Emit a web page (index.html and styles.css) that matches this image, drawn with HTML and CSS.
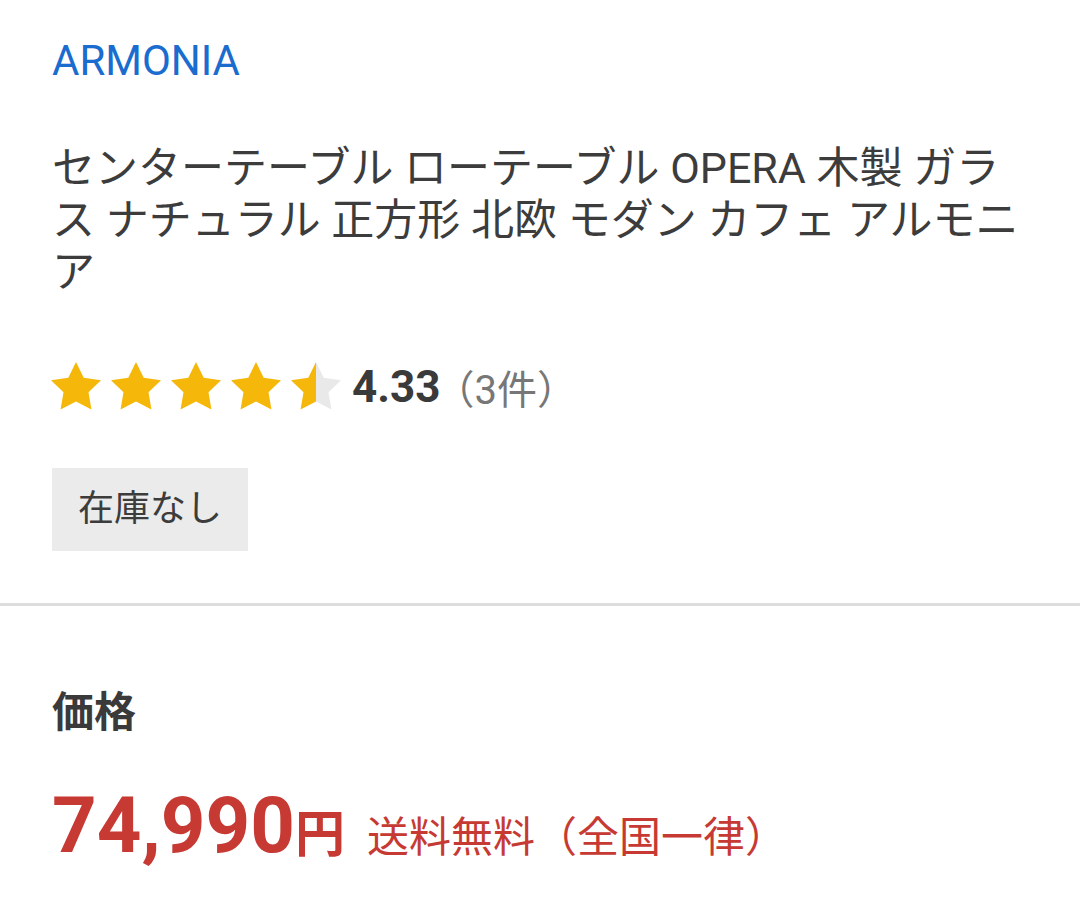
FILE: index.html
```html
<!DOCTYPE html>
<html lang="ja">
<head>
<meta charset="utf-8">
<link rel="stylesheet" href="styles.css">
</head>
<body>
<section class="info">
  <a class="brand">ARMONIA</a>
  <h1 class="title">センターテーブル ローテーブル OPERA 木製 ガラス ナチュラル 正方形 北欧 モダン カフェ アルモニア</h1>
  <div class="rating">
    <svg class="stars" width="300" height="60" viewBox="0 0 120 24">
      <defs>
        <path id="st" d="M12 2l3.09 6.26L22 9.27l-5 4.87 1.18 6.88L12 17.77l-6.18 3.25L7 14.14 2 9.27l6.91-1.01L12 2z"/>
        <linearGradient id="hg" x1="0" y1="0" x2="1" y2="0">
          <stop offset="0.5" stop-color="#f5b70a"/>
          <stop offset="0.5" stop-color="#e9e9e9"/>
        </linearGradient>
      </defs>
      <use href="#st" x="0" fill="#f5b70a"/>
      <use href="#st" x="24" fill="#f5b70a"/>
      <use href="#st" x="48" fill="#f5b70a"/>
      <use href="#st" x="72" fill="#f5b70a"/>
      <use href="#st" x="96" fill="url(#hg)"/>
    </svg>
    <span class="score">4.33</span>
    <span class="count">（3件）</span>
  </div>
  <div class="stock">在庫なし</div>
</section>
<hr class="divider">
<section class="price-block">
  <h2 class="label">価格</h2>
  <div class="price-row">
    <span class="price">74,990<span class="yen">円</span></span>
    <span class="ship">送料無料（全国一律）</span>
  </div>
</section>
</body>
</html>
```

FILE: styles.css
```css
html, body {
  margin: 0;
  padding: 0;
  background: #ffffff;
}
body {
  font-family: Roboto, "Noto Sans CJK JP", sans-serif;
  color: #3c3c3c;
}
.info {
  padding: 36px 52px 0 52px;
}
.brand {
  display: block;
  font-size: 42px;
  line-height: 50px;
  color: #1a6ccf;
}
.title {
  margin: 56px 0 0 0;
  font-size: 43px;
  font-weight: 400;
  line-height: 52px;
  color: #3c3c3c;
  padding-right: 0;
}
.rating {
  display: flex;
  align-items: center;
  margin-top: 59px;
  margin-left: -6px;
}
.stars {
  display: block;
}
.score {
  font-size: 44px;
  font-weight: 700;
  color: #3a3a3a;
  margin-left: 6px;
}
.count {
  font-size: 40px;
  color: #777777;
  margin-left: -6px;
}
.stock {
  display: inline-block;
  margin-top: 51px;
  background: #ebebeb;
  padding: 0 26px;
  height: 83px;
  line-height: 83px;
  font-size: 36px;
  color: #3c3c3c;
}
.divider {
  margin: 52px 0 0 0;
  border: none;
  height: 3px;
  background: #dddddd;
}
.price-block {
  padding: 0 52px;
}
.label {
  margin: 82px 0 0 0;
  font-size: 42px;
  line-height: 50px;
  font-weight: 700;
  color: #3a3a3a;
}
.price-row {
  display: flex;
  align-items: baseline;
  margin-top: 43px;
  color: #c63a33;
}
.price {
  font-size: 78px;
  font-weight: 700;
  line-height: 90px;
}
.yen {
  font-size: 50px;
}
.ship {
  font-size: 42px;
  margin-left: 22px;
}
```
